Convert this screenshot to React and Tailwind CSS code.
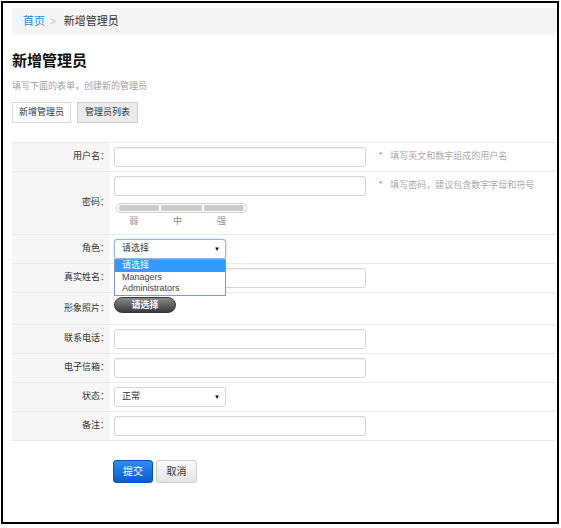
import React from 'react';

const font = { fontFamily: '"Liberation Sans", "Noto Sans CJK SC", sans-serif' };

const Label = ({ children }) => (
  <div className="w-[98px] shrink-0 bg-[#f6f6f6] flex items-center justify-end pr-[1px] text-[9px] text-[#333]">
    {children}：
  </div>
);

const TextInput = ({ w = 'w-[252px]' }) => (
  <div className={`${w} h-[20px] bg-white border border-[#d6d6d6] rounded-[3px] shadow-[inset_0_1px_1px_rgba(0,0,0,0.05)]`}></div>
);

const FakeSelect = ({ value, focused }) => (
  <div
    className={`w-[112px] h-[20px] bg-white rounded-[3px] flex items-center justify-between pl-[7px] pr-[5px] text-[9px] text-[#333] border ${
      focused ? 'border-[#8fb8ec] shadow-[0_0_2px_rgba(80,140,230,0.5)]' : 'border-[#d6d6d6]'
    }`}
  >
    <span>{value}</span>
    <span className="text-[6px] text-black">▼</span>
  </div>
);

const Hint = ({ children }) => (
  <div className="flex items-center ml-[13px] text-[9px] text-[#aaa]">
    <span className="text-[#f55] text-[8px] -mt-[4px] mr-[8px]">*</span>
    {children}
  </div>
);

const Row = ({ label, children, className = '' }) => (
  <div className={`flex border-t border-[#ebebeb] ${className}`}>
    <Label>{label}</Label>
    <div className="flex-1 pl-[4px] pt-[4px] pb-[4px]">{children}</div>
  </div>
);

export default function App() {
  return (
    <div className="pt-px pl-px bg-white" style={font}>
      <div className="w-[558px] h-[523px] border-2 border-black bg-white pl-[9px] pt-[5px] overflow-hidden">
        {/* breadcrumb */}
        <div className="h-[27px] bg-[#f5f5f5] flex items-center pl-[11px] text-[11px]">
          <span className="text-[#2b8ad6]">首页</span>
          <span className="text-[#c4c4c4] ml-[5px] mr-[8px] text-[10px]">&gt;</span>
          <span className="text-[#333]">新增管理员</span>
        </div>

        <h1 className="mt-[16px] text-[15px] leading-[20px] font-bold text-[#111]">新增管理员</h1>
        <p className="mt-[9px] text-[9px] leading-[12px] text-[#a0a0a0]">填写下面的表单，创建新的管理员</p>

        <div className="mt-[10px] flex gap-[6px]">
          <button className="h-[21px] w-[59px] bg-white border border-[#dcdcdc] text-[9px] text-[#333]">新增管理员</button>
          <button className="h-[21px] w-[61px] bg-[#ebebeb] border border-[#d0d0d0] text-[9px] text-[#333]">管理员列表</button>
        </div>

        {/* form table */}
        <div className="mt-[19px] border-b border-[#ebebeb]">
          <Row label="用户名">
            <div className="flex items-center">
              <TextInput />
              <Hint>填写英文和数字组成的用户名</Hint>
            </div>
          </Row>

          <Row label="密码">
            <div className="flex items-center">
              <TextInput />
              <Hint>填写密码，建议包含数字字母和符号</Hint>
            </div>
            <div className="mt-[7px] ml-[2px] w-[131px] h-[10px] rounded-full border border-[#cfcfcf] bg-white flex items-center gap-[2px] px-[2px]">
              <div className="flex-1 h-[6px] bg-[#cccccc] rounded-l-full"></div>
              <div className="flex-1 h-[6px] bg-[#cccccc]"></div>
              <div className="flex-1 h-[6px] bg-[#cccccc] rounded-r-full"></div>
            </div>
            <div className="flex gap-[35px] pl-[15px] mt-[2px] text-[9px] leading-[12px] text-[#888] pb-[3px]">
              <span>弱</span>
              <span>中</span>
              <span>强</span>
            </div>
          </Row>

          <Row label="角色" className="relative z-10">
            <div className="relative w-[112px]">
              <FakeSelect value="请选择" focused />
              <div className="absolute left-0 top-[20px] w-[112px] bg-white border border-[#7b9bd0] text-[9px] leading-[11.5px]">
                <div className="bg-[#3399ff] text-white pl-[7px]">请选择</div>
                <div className="text-[#444] pl-[7px]">Managers</div>
                <div className="text-[#444] pl-[7px]">Administrators</div>
              </div>
            </div>
          </Row>

          <Row label="真实姓名">
            <TextInput />
          </Row>

          <Row label="形象照片">
            <div className="flex pb-[7px]">
              <button className="w-[62px] h-[16px] rounded-full border border-[#3a3a3a] bg-linear-to-b from-[#8a8a8a] to-[#3c3c3c] text-white text-[9px] font-bold leading-none">
                请选择
              </button>
            </div>
          </Row>

          <Row label="联系电话">
            <TextInput />
          </Row>

          <Row label="电子信箱">
            <TextInput />
          </Row>

          <Row label="状态">
            <FakeSelect value="正常" />
          </Row>

          <Row label="备注">
            <TextInput />
          </Row>
        </div>

        <div className="mt-[19px] ml-[101px] flex gap-[3px]">
          <button className="w-[40px] h-[23px] rounded-[3px] border border-[#0b55b8] bg-linear-to-b from-[#2b8cf0] to-[#0a5ccc] text-white text-[10px]">
            提交
          </button>
          <button className="w-[41px] h-[23px] rounded-[3px] border border-[#cdcdcd] bg-linear-to-b from-[#fafafa] to-[#e4e4e4] text-[#333] text-[10px]">
            取消
          </button>
        </div>
      </div>
    </div>
  );
}
